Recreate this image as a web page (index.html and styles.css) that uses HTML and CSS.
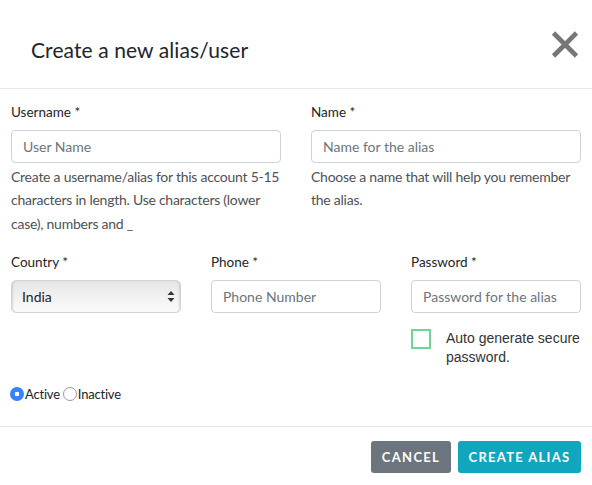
FILE: index.html
```html
<!DOCTYPE html>
<html>
<head>
<meta charset="utf-8">
<link rel="stylesheet" href="styles.css">
</head>
<body>
<div class="modal">
  <div class="modal-header">
    <h5 class="title">Create a new alias/user</h5>
    <button class="close" type="button" aria-label="Close">
      <svg width="28" height="27" viewBox="0 0 28 27"><path d="M2.5 2 L25.5 25 M25.5 2 L2.5 25" stroke="#777" stroke-width="4.6" fill="none"/></svg>
    </button>
  </div>
  <div class="modal-body">
    <div class="row two">
      <div class="field">
        <label class="lbl">Username *</label>
        <input class="ctrl" type="text" placeholder="User Name">
        <p class="help">Create a username/alias for this account 5-15 characters in length. Use characters (lower case), numbers and _</p>
      </div>
      <div class="field">
        <label class="lbl">Name *</label>
        <input class="ctrl" type="text" placeholder="Name for the alias">
        <p class="help">Choose a name that will help you remember the alias.</p>
      </div>
    </div>
    <div class="row three">
      <div class="field">
        <label class="lbl">Country *</label>
        <div class="select-wrap">
          <select class="sel"><option>India</option></select>
          <svg class="arrows" width="8" height="13" viewBox="0 0 8 13"><path d="M4 1 L7.5 5 L0.5 5 Z M4 12 L7.5 8 L0.5 8 Z" fill="#333"/></svg>
        </div>
      </div>
      <div class="field">
        <label class="lbl">Phone *</label>
        <input class="ctrl" type="text" placeholder="Phone Number">
      </div>
      <div class="field">
        <label class="lbl">Password *</label>
        <input class="ctrl" type="text" placeholder="Password for the alias">
        <div class="auto">
          <span class="box"></span>
          <span class="auto-text">Auto generate secure password.</span>
        </div>
      </div>
    </div>
    <div class="radios">
      <span class="radio on"></span><span class="rlbl">Active</span>
      <span class="radio"></span><span class="rlbl">Inactive</span>
    </div>
  </div>
  <div class="modal-footer">
    <button class="btn cancel" type="button">Cancel</button>
    <button class="btn create" type="button">Create Alias</button>
  </div>
</div>
</body>
</html>
```
FILE: styles.css
```css
html, body {
  margin: 0;
  padding: 0;
  background: #fff;
}
body {
  font-family: Lato, "Noto Sans", sans-serif;
  color: #212529;
}
.modal {
  width: 592px;
}
.modal-header {
  height: 89px;
  border-bottom: 1px solid #e6e6e6;
  display: flex;
  align-items: center;
  justify-content: space-between;
  padding: 0 13px 0 31px;
  box-sizing: border-box;
}
.title {
  margin: 0;
  font-size: 21px;
  font-weight: 400;
  color: #212529;
  padding-top: 11px;
  letter-spacing: 0.1px;
}
.close {
  border: 0;
  background: none;
  padding: 0;
  margin: 0;
  width: 28px;
  height: 27px;
  cursor: pointer;
}
.close svg { display: block; }
.modal-body {
  padding: 13px 11px 0;
}
.row {
  display: grid;
  column-gap: 30px;
}
.two { grid-template-columns: 270px 270px; }
.three { grid-template-columns: 170px 170px 170px; margin-top: 17px; }
.field {
  display: flex;
  flex-direction: column;
}
.lbl {
  font-size: 13.5px;
  line-height: 20px;
  height: 20px;
  margin-bottom: 8px;
  color: #212529;
}
.ctrl {
  box-sizing: border-box;
  height: 33px;
  width: 100%;
  border: 1px solid #ced4da;
  border-radius: 4px;
  padding: 0 11px;
  font-family: inherit;
  font-size: 14px;
  color: #495057;
  outline: none;
  margin: 0;
}
.ctrl::placeholder { color: #6c757d; }
.help {
  margin: 2px 0 0;
  font-size: 14px;
  line-height: 23.3px;
  letter-spacing: -0.25px;
  color: #4d5257;
}
.select-wrap {
  position: relative;
  height: 33px;
}
.sel {
  -webkit-appearance: none;
  appearance: none;
  box-sizing: border-box;
  width: 100%;
  height: 33px;
  border: 1px solid #d4d4d4;
  border-radius: 5px;
  background: linear-gradient(#e6e6e6, #f4f4f4 65%, #fbfbfb);
  box-shadow: inset 2px 0 2px -1px rgba(0,0,0,.12), inset -2px 0 2px -1px rgba(0,0,0,.12);
  padding: 0 10px;
  font-family: inherit;
  font-size: 14px;
  color: #222;
  margin: 0;
}
.arrows {
  position: absolute;
  right: 6px;
  top: 10px;
}
.auto {
  display: flex;
  align-items: flex-start;
  margin-top: 16px;
}
.box {
  flex: none;
  box-sizing: border-box;
  width: 20px;
  height: 20px;
  border: 2px solid #6fd496;
  margin-right: 15px;
}
.auto-text {
  font-family: "Liberation Sans", Arial, sans-serif;
  font-size: 14px;
  line-height: 19px;
  color: #333;
}
.radios {
  display: flex;
  align-items: center;
  margin-top: 17px;
  height: 20px;
  font-size: 13px;
  letter-spacing: -0.2px;
  margin-left: -1px;
}
.radio {
  box-sizing: border-box;
  width: 14px;
  height: 14px;
  border-radius: 50%;
  border: 1px solid #9a9a9a;
  background: #fff;
  margin-right: 1px;
}
.radio.on {
  border: 0;
  background: radial-gradient(circle, #fff 0 2px, #3a82f7 2.6px);
}
.rlbl { margin-right: 3px; color: #212529; }
.modal-footer {
  margin-top: 22px;
  border-top: 1px solid #e6e6e6;
  display: flex;
  justify-content: flex-end;
  gap: 7px;
  padding: 14px 11px 0;
}
.btn {
  border: 0;
  border-radius: 3px;
  height: 32px;
  color: #fff;
  font-family: inherit;
  font-size: 13px;
  font-weight: 700;
  letter-spacing: 1.3px;
  text-transform: uppercase;
  padding: 0;
}
.cancel { background: #6c757d; width: 80px; }
.create { background: #10a6bd; width: 123px; }
```
